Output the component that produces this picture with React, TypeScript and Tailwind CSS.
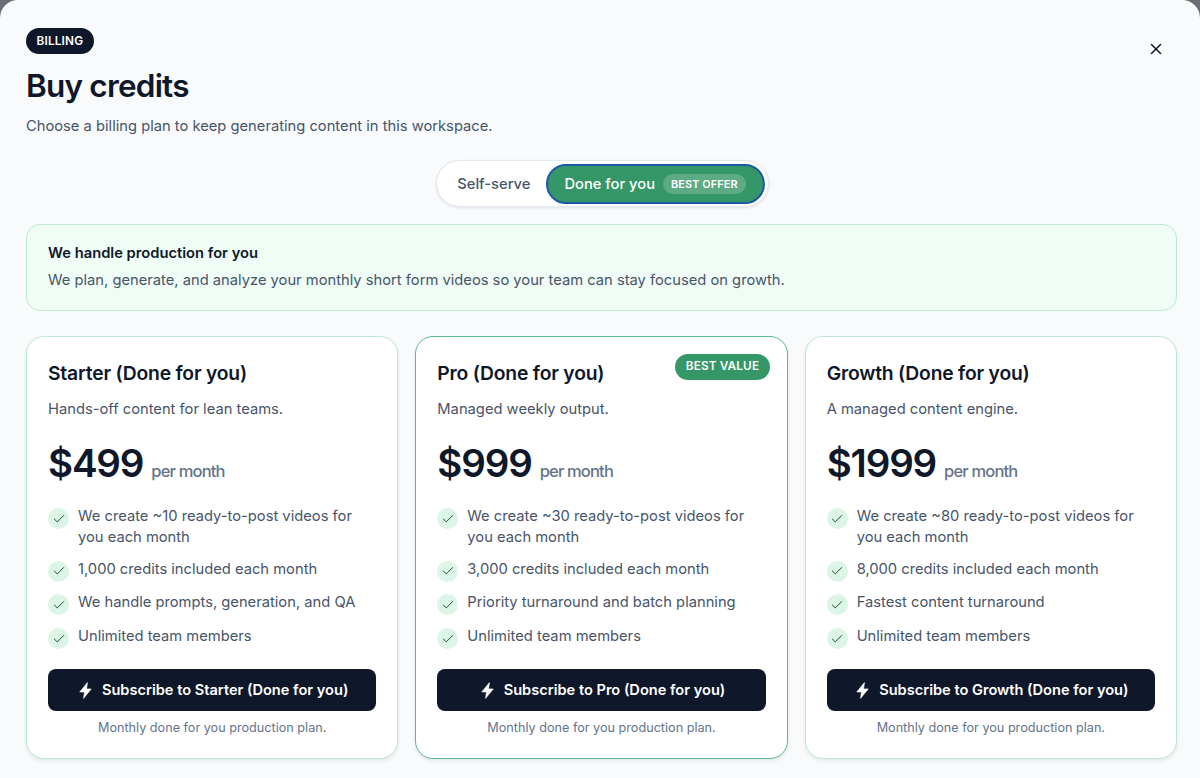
import React from 'react';
import { Check, X } from 'lucide-react';

type Plan = {
  name: string;
  tagline: string;
  price: string;
  features: string[];
  featured?: boolean;
};

const plans: Plan[] = [
  {
    name: 'Starter',
    tagline: 'Hands-off content for lean teams.',
    price: '$499',
    features: [
      'We create ~10 ready-to-post videos for you each month',
      '1,000 credits included each month',
      'We handle prompts, generation, and QA',
      'Unlimited team members',
    ],
  },
  {
    name: 'Pro',
    tagline: 'Managed weekly output.',
    price: '$999',
    featured: true,
    features: [
      'We create ~30 ready-to-post videos for you each month',
      '3,000 credits included each month',
      'Priority turnaround and batch planning',
      'Unlimited team members',
    ],
  },
  {
    name: 'Growth',
    tagline: 'A managed content engine.',
    price: '$1999',
    features: [
      'We create ~80 ready-to-post videos for you each month',
      '8,000 credits included each month',
      'Fastest content turnaround',
      'Unlimited team members',
    ],
  },
];

const Bolt = () => (
  <svg width="13" height="17" viewBox="0 0 13 17" fill="currentColor" stroke="currentColor" strokeWidth="0.7" strokeLinejoin="round">
    <path d="M8.4 0.7 L0.8 9.9 L5.5 9.9 L4.6 16.3 L12.2 7 L7.5 7 Z" />
  </svg>
);

const PlanCard: React.FC<{ plan: Plan }> = ({ plan }) => (
  <div
    className={`relative flex flex-col h-[423px] rounded-[18px] bg-white border px-[21px] pt-[21px] shadow-[0_2px_4px_rgba(15,23,42,0.08)] ${
      plan.featured ? 'border-[#5bb98c]' : 'border-[#bde8d0]'
    }`}
  >
    {plan.featured && (
      <span className="absolute top-[17px] right-[17px] h-[26px] px-[10.5px] flex items-center rounded-full bg-[#359767] text-white text-[11.8px] font-semibold tracking-[0.01em]">
        BEST VALUE
      </span>
    )}
    <h3 className="text-[19.3px] leading-[30px] font-semibold text-[#0f172a] tracking-[-0.01em]">{plan.name} (Done for you)</h3>
    <p className="mt-[11px] text-[14.72px] leading-[20px] text-[#475569]">{plan.tagline}</p>
    <div className="mt-[18px] flex items-baseline gap-2 h-[52px]">
      <span className="text-[38.5px] leading-[52px] font-semibold text-[#0f172a] tracking-[-0.03em]">{plan.price}</span>
      <span className="text-[16.5px] font-medium text-[#64748b] tracking-[-0.05em]">per month</span>
    </div>
    <ul className="mt-[17px] flex flex-col gap-[10.7px]">
      {plan.features.map((f) => (
        <li key={f} className="flex gap-[9px] text-[14.72px] leading-[21px] text-[#475569]">
          <span className="mt-[2px] w-[21px] h-[21px] shrink-0 rounded-full bg-[#dcf5e7] flex items-center justify-center text-[#14532d]">
            <Check size={14} strokeWidth={1.7} />
          </span>
          <span>{f}</span>
        </li>
      ))}
    </ul>
    <button className="mt-auto h-[42px] pl-[3px] rounded-[8px] bg-[#0f172a] text-white text-[14.6px] font-semibold flex items-center justify-center gap-[10px]">
      <Bolt />
      <span className="pt-[2px]">Subscribe to {plan.name} (Done for you)</span>
    </button>
    <p className="mt-[8px] mb-[21px] text-center text-[12.65px] leading-[18px] text-[#64748b]">Monthly done for you production plan.</p>
  </div>
);

export default function App() {
  return (
    <div className="w-[1200px] h-[778px] overflow-hidden bg-[#6b6e76]" style={{ fontFamily: 'Inter, "Liberation Sans", sans-serif' }}>
      <div className="relative h-[800px] rounded-[18px] bg-[#f8fafc] pl-[26px] pr-[23px] pt-[28px]">
        <button className="absolute top-[40px] right-[35px] text-[#0f172a]">
          <X size={18} />
        </button>
        <span className="flex w-fit h-[26px] pt-[1px] items-center rounded-full bg-[#0f172a] px-[10.5px] text-[11.8px] font-semibold tracking-[0.015em] text-white">
          BILLING
        </span>
        <h1 className="mt-[10px] text-[31.5px] leading-[44px] font-semibold tracking-[-0.025em] text-[#0f172a]">Buy credits</h1>
        <p className="mt-[6px] text-[14.72px] leading-[24px] text-[#475569]">Choose a billing plan to keep generating content in this workspace.</p>

        <div className="mt-[22px] pl-[2px] flex justify-center">
          <div className="flex items-center h-[47px] p-[3px] rounded-full bg-white border border-[#e2e8f0] shadow-[0_1px_3px_rgba(15,23,42,0.1)]">
            <span className="pl-[17px] pr-[16px] pt-[1px] text-[14.72px] font-medium text-[#475569]">Self-serve</span>
            <span className="flex items-center gap-2 h-[40px] pl-[16px] pr-[17px] rounded-full bg-[#359767] border-2 border-[#1f57a8] text-white text-[14.72px] font-medium">
              <span className="pt-[1px]">Done for you</span>
              <span className="flex items-center h-[20px] px-[8px] pt-[1px] rounded-full bg-white/20 text-[10.9px] font-semibold tracking-[0.01em]">BEST OFFER</span>
            </span>
          </div>
        </div>

        <div className="mt-[17px] h-[87px] rounded-[14px] border border-[#bde8d0] bg-[#f0fdf6] px-[21px] pt-[17px]">
          <div className="text-[14.72px] leading-[22px] font-semibold text-[#0f172a]">We handle production for you</div>
          <p className="mt-[5px] text-[14.72px] leading-[22px] text-[#475569]">We plan, generate, and analyze your monthly short form videos so your team can stay focused on growth.</p>
        </div>

        <div className="mt-[25px] grid grid-cols-3 gap-[17px]">
          {plans.map((p) => (
            <PlanCard key={p.name} plan={p} />
          ))}
        </div>
      </div>
    </div>
  );
}
